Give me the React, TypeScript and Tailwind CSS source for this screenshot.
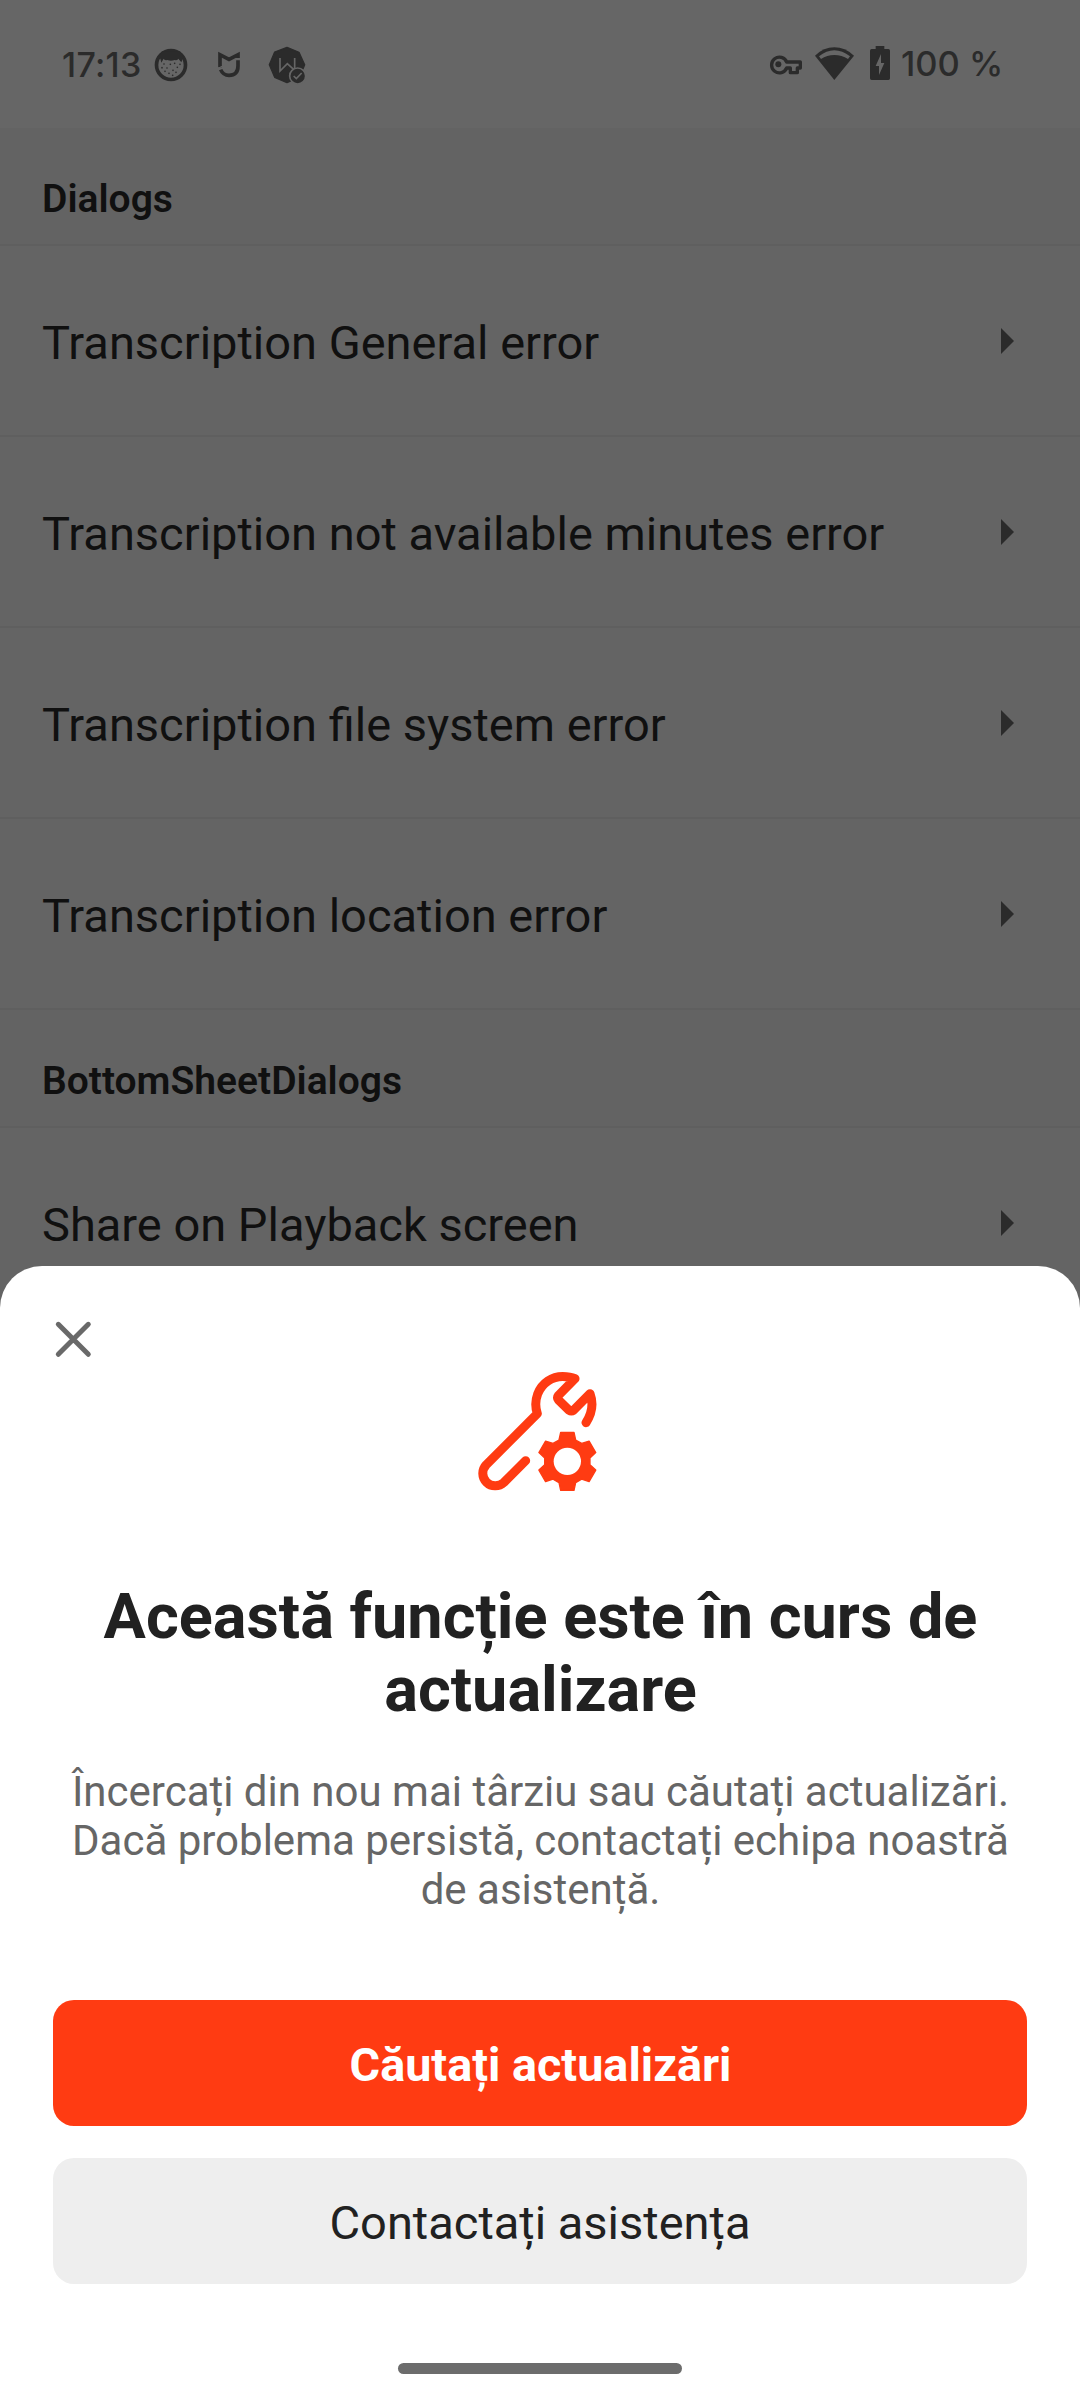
const FIRST_GROUP = [
  "Transcription General error",
  "Transcription not available minutes error",
  "Transcription file system error",
  "Transcription location error",
];

const FRECKLES = [
  [372, 102], [381, 114], [391, 103], [404, 100], [412, 112], [399, 121],
  [387, 130], [375, 124], [408, 127], [398, 136], [420, 103], [366, 113],
];

const gearPoints = Array.from({ length: 6 }, (_, i) => {
  const a = (i * Math.PI) / 3;
  return [[-25, -64], [-20, -87], [20, -87], [25, -64]]
    .map(([x, y]) => {
      const px = 322 + x * Math.cos(a) - y * Math.sin(a);
      const py = 334 + x * Math.sin(a) + y * Math.cos(a);
      return `${px.toFixed(1)},${py.toFixed(1)}`;
    })
    .join(" ");
}).join(" ");

function StatusBar() {
  return (
    <div className="flex h-32 items-start justify-between bg-[#666666] pt-[45px] pr-[76px] pl-[62px] text-[#2b2b2b]">
      <div className="flex items-start">
        <span className="w-[92px] font-['Inter',sans-serif] text-[34px] leading-[39px] font-medium tracking-[0.3px] whitespace-nowrap">
          17:13
        </span>
        <svg viewBox="342 45 102 120" className="h-10 w-[34px]">
          <circle cx="393" cy="105" r="43.5" fill="none" stroke="currentColor" strokeWidth="11" />
          <path d="M356 82 L366 64 H420 L430 82 L424 97 L415 86 Q411 92 404 90 Q393 94 382 90 Q375 92 371 86 L364 98 L361 86Z" fill="currentColor" />
          {FRECKLES.map(([x, y]) => (
            <circle key={`${x}-${y}`} cx={x} cy={y} r="2.5" fill="currentColor" />
          ))}
        </svg>
        <svg viewBox="528 45 78 120" className="ml-7 h-10 w-[26px]" fill="none" stroke="currentColor" strokeWidth="11">
          <path d="M540 112 V74 L567 88 L594 74 V84" />
          <path d="M594 91 V108 Q594 136 567 136 Q549 136 542 119" />
          <path d="M533 115 L548 108" strokeWidth="3" stroke="#666666" />
        </svg>
        <svg viewBox="684 45 114 120" className="ml-[26px] h-10 w-[38px]">
          <path d="M741 52 L777 67 L794 104 L779 141 L741 158 L704 142 L688 104 L704 66Z" fill="currentColor" stroke="currentColor" strokeWidth="4" strokeLinejoin="round" />
          <path d="M720 84 V123 L742 101 L764 121 V84" fill="none" stroke="#666666" strokeWidth="5" />
          <circle cx="773" cy="138" r="24" fill="currentColor" stroke="#666666" strokeWidth="5" />
          <path d="M761 138 L769 146 L785 129" fill="none" stroke="#666666" strokeWidth="5" />
        </svg>
      </div>
      <div className="flex items-start">
        <svg viewBox="57 45 105 120" className="h-10 w-[35px]">
          <path d="M113 96 H154 V114 H145 V128 H124 V114 H113 A23.5 23.5 0 1 1 113 96Z" fill="none" stroke="currentColor" strokeWidth="10" strokeLinejoin="round" />
          <circle cx="88" cy="103" r="9" fill="currentColor" />
        </svg>
        <svg viewBox="195 45 123 120" className="ml-[11px] h-10 w-[41px]">
          <path d="M256 150 L198 77 Q224 52 256 52 Q288 52 315 77Z" fill="currentColor" />
          <path d="M210 79 Q232 61 256 61 Q280 61 303 79 L297 87 Q278 75 256 75 Q234 75 216 87Z" fill="#666666" />
        </svg>
        <svg viewBox="360 45 66 120" className="ml-3.5 h-10 w-[22px]">
          <path d="M380 48 H406 V57 H418 Q423 57 423 62 V145 Q423 150 418 150 H368 Q363 150 363 145 V62 Q363 57 368 57 H380Z" fill="currentColor" />
          <path d="M396 72 V99 H406 L390 135 V108 H380Z" fill="#666666" />
        </svg>
        <span className="ml-[10px] w-[103px] font-['Inter',sans-serif] text-[34.5px] leading-[37px] font-medium whitespace-nowrap">
          100 %
        </span>
      </div>
    </div>
  );
}

function SectionHeader({ title }: { title: string }) {
  return (
    <h2 className="flex h-[118px] items-center border-b-2 border-[#5f5f5f] bg-[#636363] pt-[27px] pl-[42px] text-[39px] font-semibold text-[#101010]">
      {title}
    </h2>
  );
}

function Row({ label }: { label: string }) {
  return (
    <div className="flex h-[191px] items-center justify-between border-b-2 border-[#5f5f5f] bg-[#646464] pr-[66px] pl-[42px] text-[47px] text-[#101010]">
      <span className="pt-[5px] whitespace-nowrap">{label}</span>
      <svg viewBox="0 0 13 26" className="h-[26px] w-[13px] text-[#2b2b2b]">
        <path d="M0 0 L13 13 L0 26Z" fill="currentColor" />
      </svg>
    </div>
  );
}

function UpdateSheet() {
  return (
    <section className="absolute inset-x-0 top-[1266px] bottom-0 flex flex-col items-center rounded-t-[42px] bg-white px-[53px] text-center">
      <button aria-label="Close" className="mt-[53px] h-[40px] w-[40px] self-start">
        <svg viewBox="0 0 40 40" className="h-10 w-10" fill="none" stroke="#696969" strokeWidth="5" strokeLinecap="round">
          <path d="M5.3 5.3 L35.3 35.3 M35.3 5.3 L5.3 35.3" />
        </svg>
      </button>
      <svg viewBox="0 0 480 480" className="-mt-[9px] h-40 w-40" fill="none" stroke="#ff3b12" strokeWidth="27" strokeLinecap="round" strokeLinejoin="round">
        <path d="M197 332 L131.5 397.5 A37.5 37.5 0 0 1 78.5 344.5 L232 191 C225 170 227 148 233 132 C246 98 277 79.500 308 79.500 C321 79.500 334 81 345 86 L295.500 136 Q290 143 295.500 150 L327 180.500 Q334 185 341 180.500 L390 131 C401 161 395 192 378 218" />
        <polygon points={gearPoints} fill="#ff3b12" strokeWidth="4" />
        <circle cx="322" cy="334" r="41" fill="#ffffff" stroke="none" />
      </svg>
      <h1 className="mt-[70px] pl-px text-[63px] leading-[73px] font-bold text-[#212121]">
        Această funcție este în curs de
        <br />
        actualizare
      </h1>
      <p className="mt-[41px] pl-px text-[42px] leading-[49px] whitespace-nowrap text-[#666666]">
        Încercați din nou mai târziu sau căutați actualizări.
        <br />
        Dacă problema persistă, contactați echipa noastră
        <br />
        de asistență.
      </p>
      <button className="mt-[86px] h-[126px] w-full rounded-[21px] bg-[#ff3b12] pt-1 pl-px text-[46.75px] font-bold text-white">
        Căutați actualizări
      </button>
      <button className="mt-8 h-[126px] w-full rounded-[21px] bg-[#eeeeee] pt-1 text-[47px] text-[#212121]">
        Contactați asistența
      </button>
      <div className="mt-[79px] h-[11px] w-[284px] shrink-0 rounded-full bg-[#6c6c6c]" />
    </section>
  );
}

export default function App() {
  return (
    <main className="relative h-[2400px] w-[1080px] overflow-hidden bg-[#646464] font-['Roboto',sans-serif]">
      <StatusBar />
      <SectionHeader title="Dialogs" />
      {FIRST_GROUP.map((label) => (
        <Row key={label} label={label} />
      ))}
      <SectionHeader title="BottomSheetDialogs" />
      <Row label="Share on Playback screen" />
      <UpdateSheet />
    </main>
  );
}
